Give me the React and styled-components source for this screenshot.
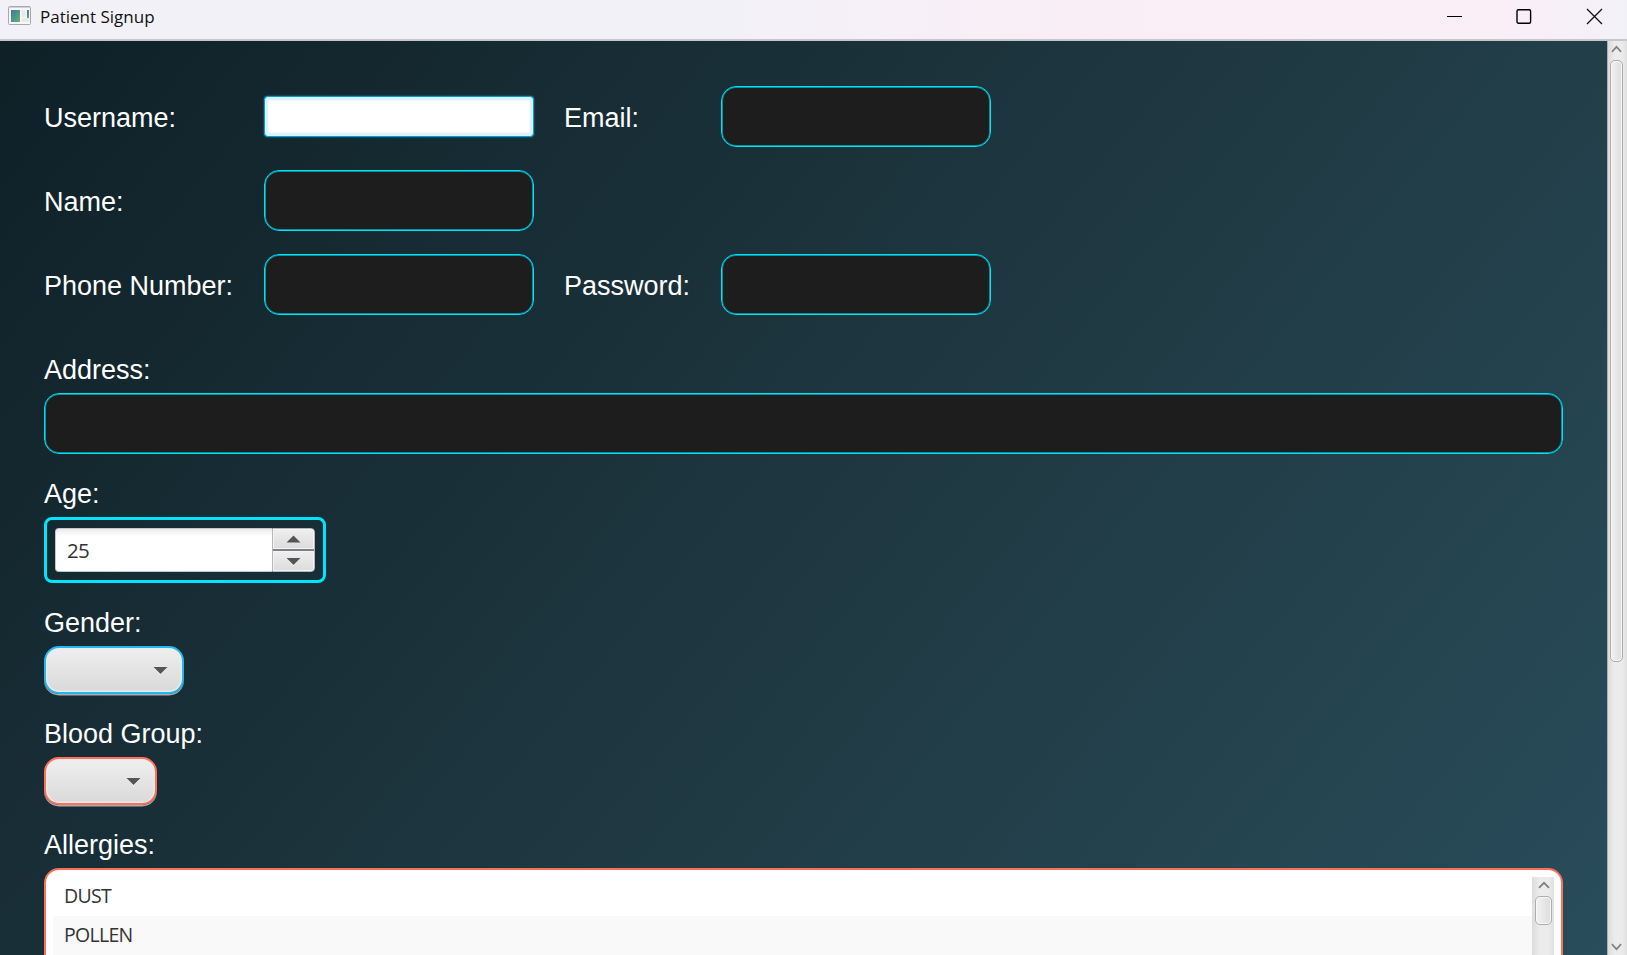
import React from "react";
import styled, { createGlobalStyle } from "styled-components";

const GlobalStyle = createGlobalStyle`
  * { box-sizing: border-box; }
  body { margin: 0; overflow: hidden; }
`;

const Window = styled.div`
  width: 1627px;
  height: 955px;
  display: flex;
  flex-direction: column;
  overflow: hidden;
  font-family: "Liberation Sans", Arial, sans-serif;
`;

const TitleBar = styled.header`
  flex: none;
  height: 41px;
  display: flex;
  align-items: flex-start;
  padding: 6px 24px 0 8px;
  background: linear-gradient(90deg, #f3f1f8 0%, #f3f1f8 45%, #f9eef6 65%, #faeef7 92%, #f3f1f8 100%);
  border-bottom: 2px solid #c8c6c9;
`;

const Title = styled.h1`
  flex: 1;
  margin: 0 0 0 9px;
  font: 400 17px/22px "Open Sans", sans-serif;
  color: #111;
`;

const WindowControls = styled.div`
  display: flex;
  gap: 53px;
  padding-top: 2px;
  svg { display: block; }
`;

const Body = styled.div`
  flex: 1;
  min-height: 0;
  display: flex;
`;

const Viewport = styled.main`
  flex: 1;
  overflow: hidden;
`;

const Form = styled.form`
  height: 1334px;
  padding: 45px 44px 0;
  display: flex;
  flex-direction: column;
  background: linear-gradient(129.7deg, #0f2027, #203a43 50%, #2c5364);
`;

const AccountGrid = styled.div`
  display: grid;
  grid-template-columns: 190px 270px 127px 270px;
  grid-auto-rows: 61px;
  gap: 23px 30px;
  align-items: center;
  margin-bottom: 38px;
`;

const Label = styled.label`
  padding-top: 3px;
  font-size: 27px;
  line-height: 31px;
  color: #fff;
  white-space: nowrap;
`;

const TextField = styled.div`
  height: 61px;
  border-radius: 15px;
  border: 1px solid #00e0f8;
  background: #1d1d1d;
  box-shadow: inset 0 0 0 1px #0c929f;
`;

const RowEnd = styled.div`
  grid-column: span 2;
`;

const FocusedField = styled.div`
  height: 41px;
  border-radius: 4px;
  border: 1px solid #039ed3;
  background: #fff;
  box-shadow: 0 0 2px #0493c6, inset 0 0 1px 3.5px #dff2f9;
`;

const Field = styled.section`
  display: flex;
  flex-direction: column;
  align-items: ${(p) => (p.$stretch ? "stretch" : "flex-start")};
  gap: 7px;
  margin-bottom: ${(p) => p.$after || 0}px;
  ${Label} { padding-top: 2px; }
`;

const Spinner = styled.div`
  width: 282px;
  height: 66px;
  padding: 8px;
  border: 3px solid #00e5ff;
  border-radius: 8px;
  display: flex;
`;

const SpinnerValue = styled.div`
  flex: 1;
  padding-left: 11px;
  border: 1px solid #c4c7c8;
  border-right: 0;
  border-radius: 4px 0 0 4px;
  background: linear-gradient(#ececec, #fff 7px);
  font: 400 20.5px/42px "Open Sans", sans-serif;
  letter-spacing: -0.8px;
  color: #333;
`;

const SpinnerButtons = styled.div`
  width: 43px;
  display: flex;
  flex-direction: column;
  border: 1px solid #b4b6b7;
  border-radius: 0 4px 4px 0;
  overflow: hidden;
`;

const StepButton = styled.div`
  flex: 1;
  display: flex;
  align-items: center;
  justify-content: center;
  background: linear-gradient(#efefef, #dcdcdc);
  box-shadow: inset 0 0 0 1px #f4f4f4;
  & + & { border-top: 2px solid #7c8284; }
`;

const ComboBox = styled.div`
  width: ${(p) => p.$width}px;
  height: 48px;
  padding-right: 14px;
  display: flex;
  align-items: center;
  justify-content: flex-end;
  border: 2px solid ${(p) => p.$color};
  border-radius: 15px;
  background: linear-gradient(#efefef, #d9d9d9);
  box-shadow: inset 0 0 0 1.5px #ebebeb, 0 1.5px 0 #a9adaf;
  margin-bottom: 1px;
`;

const ListView = styled.div`
  height: 300px;
  display: flex;
  padding: 7px;
  border: 2px solid #ff6f59;
  border-radius: 15px;
  background: #fff;
`;

const ListItems = styled.ul`
  flex: 1;
  margin: 0;
  padding: 0;
  list-style: none;
`;

const ListItem = styled.li`
  height: 39px;
  padding-left: 11px;
  font: 400 19.5px/38px "Open Sans", sans-serif;
  letter-spacing: -0.7px;
  color: #333;
  background: ${(p) => (p.$odd ? "#f9f9f9" : "#fff")};
`;

const ScrollTrack = styled.div`
  width: ${(p) => p.$width}px;
  flex: none;
  display: flex;
  flex-direction: column;
  align-items: center;
  padding: ${(p) => p.$padding};
  border-left: ${(p) => (p.$outer ? "1px solid #a9b0b4" : "0")};
  background: linear-gradient(90deg, #dcdcdc, #ececec 35%, #ebebeb 75%, #e0e0e0);
  svg { display: block; flex: none; }
`;

const ScrollThumb = styled.div`
  width: ${(p) => p.$width}px;
  height: ${(p) => p.$height}px;
  margin: ${(p) => p.$top}px 0 auto;
  border: 1px solid #acacac;
  border-radius: 5px;
  background: linear-gradient(90deg, #f2f2f2, #dddddd);
  box-shadow: inset 0 0 0 1px #f8f8f8;
`;

const Triangle = ({ up }) => (
  <svg width="15" height="9" viewBox="0 0 15 9">
    <path d="M1 2H14L7.5 9Z" fill="#fff" opacity=".7" transform={up ? "rotate(180 7.5 4.5)" : undefined} />
    <path d={up ? "M.5 7.5H14.5L7.5 .5Z" : "M.5 1H14.5L7.5 8Z"} fill="#555" />
  </svg>
);

const Chevron = ({ down, size = 12 }) => (
  <svg width={size} height="8" viewBox="0 0 12 8" preserveAspectRatio="none">
    <path d={down ? "M1 1.2L6 6.2L11 1.2" : "M1 6.8L6 1.8L11 6.8"} fill="none" stroke="#808080" strokeWidth="1.8" />
  </svg>
);

const AppIcon = () => (
  <svg width="23" height="19" viewBox="0 0 23 19">
    <defs>
      <linearGradient id="pane" x1="0" y1="0" x2="1" y2="1">
        <stop offset="0" stopColor="#3f76a5" />
        <stop offset="1" stopColor="#5fb574" />
      </linearGradient>
    </defs>
    <rect x=".5" y=".5" width="22" height="18" rx="1" fill="#f7f7f7" stroke="#a5a8ad" />
    <path d="M1 1.500H22" stroke="#cfd1d5" />
    <rect x="3" y="4" width="9" height="12" fill="url(#pane)" />
    <rect x="13.500" y="4" width="4" height="7" fill="#e9e9ea" />
    <rect x="13.500" y="12" width="8" height="4" fill="#e9e9ea" />
    <rect x="19" y="4" width="2" height="8" fill="url(#pane)" />
  </svg>
);

export default function App() {
  return (
    <Window>
      <GlobalStyle />
      <TitleBar>
        <AppIcon />
        <Title>Patient Signup</Title>
        <WindowControls>
          <svg width="17" height="17" viewBox="0 0 17 17"><path d="M1 8.500H16" stroke="#000" /></svg>
          <svg width="17" height="17" viewBox="0 0 17 17"><rect x="1" y="1.700" width="13.600" height="13.600" rx="1.500" fill="none" stroke="#000" strokeWidth="1.400" /></svg>
          <svg width="17" height="17" viewBox="0 0 17 17"><path d="M1 1L16 16M16 1L1 16" stroke="#111" strokeWidth="1.300" /></svg>
        </WindowControls>
      </TitleBar>
      <Body>
        <Viewport>
          <Form>
            <AccountGrid>
              <Label>Username:</Label>
              <FocusedField />
              <Label>Email:</Label>
              <TextField />
              <Label>Name:</Label>
              <TextField />
              <RowEnd />
              <Label>Phone Number:</Label>
              <TextField />
              <Label>Password:</Label>
              <TextField />
            </AccountGrid>
            <Field $stretch $after={23}>
              <Label>Address:</Label>
              <TextField />
            </Field>
            <Field $after={23}>
              <Label>Age:</Label>
              <Spinner>
                <SpinnerValue>25</SpinnerValue>
                <SpinnerButtons>
                  <StepButton><Triangle up /></StepButton>
                  <StepButton><Triangle /></StepButton>
                </SpinnerButtons>
              </Spinner>
            </Field>
            <Field $after={22}>
              <Label>Gender:</Label>
              <ComboBox $width={140} $color="#22b8ee"><Triangle /></ComboBox>
            </Field>
            <Field $after={22}>
              <Label>Blood Group:</Label>
              <ComboBox $width={113} $color="#ff6f59"><Triangle /></ComboBox>
            </Field>
            <Field $stretch>
              <Label>Allergies:</Label>
              <ListView>
                <ListItems>
                  <ListItem>DUST</ListItem>
                  <ListItem $odd>POLLEN</ListItem>
                </ListItems>
                <ScrollTrack $width={22} $padding="4px 0 0 1px">
                  <Chevron />
                  <ScrollThumb $width={17} $height={29} $top={7} />
                </ScrollTrack>
              </ListView>
            </Field>
          </Form>
        </Viewport>
        <ScrollTrack $outer $width={20} $padding="4px 2px 4px 0">
          <Chevron size={11} />
          <ScrollThumb $width={13} $height={602} $top={7} />
          <Chevron down size={11} />
        </ScrollTrack>
      </Body>
    </Window>
  );
}
